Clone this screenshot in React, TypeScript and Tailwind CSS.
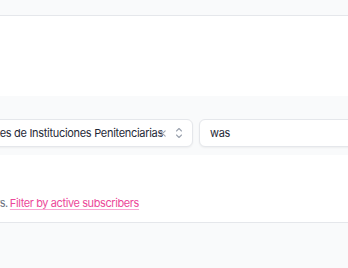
import React from "react";

export default function App() {
  return (
    <div
      className="w-[348px] h-[268px] overflow-hidden bg-[#f9fafb] flex flex-col"
      style={{ fontFamily: "Inter, 'Liberation Sans', sans-serif" }}
    >
      <div className="h-[16px] bg-[#f9fafb] border-b border-[#e5e7eb] shadow-[0_1px_2px_rgba(0,0,0,0.05)] shrink-0" />
      <div className="h-[80px] bg-white shrink-0" />
      <div className="h-[59px] bg-[#f9fafb] shrink-0 flex items-start gap-[6px] pt-[23px]">
        <div className="ml-[-120px] w-[313px] h-[28px] shrink-0 bg-white border border-[#e5e7eb] rounded-[6px] shadow-[0_1px_2px_rgba(0,0,0,0.05)] flex items-center overflow-hidden">
          <div className="flex-1 min-w-0 overflow-hidden flex justify-end">
            <span className="shrink-0 whitespace-nowrap text-[11px] tracking-[-0.3px] text-[#1f2937]">
              Funcionarios Agentes de Instituciones Penitenciarias
            </span>
          </div>
          <svg width="9" height="9" viewBox="0 0 10 10" className="relative z-10 shrink-0 ml-[-5px] text-[#9ca3af]">
            <path d="M2 2 L8 8 M8 2 L2 8" stroke="currentColor" strokeWidth="1.2" strokeLinecap="round" />
          </svg>
          <svg width="12" height="14" viewBox="0 0 12 14" className="shrink-0 ml-[6px] mr-[7px] text-[#9ca3af]">
            <path d="M3.5 5 L6 2.5 L8.5 5 M3.5 9 L6 11.5 L8.5 9" fill="none" stroke="currentColor" strokeWidth="1.1" strokeLinecap="round" strokeLinejoin="round" />
          </svg>
        </div>
        <div className="w-[200px] h-[28px] shrink-0 bg-white border border-[#e5e7eb] rounded-[6px] shadow-[0_1px_2px_rgba(0,0,0,0.05)] flex items-center pl-[10px]">
          <span className="text-[11px] tracking-[-0.3px] text-[#1f2937]">was</span>
        </div>
      </div>
      <div className="h-[68px] bg-white shrink-0 border-b border-[#e5e7eb] flex justify-end items-start pt-[41px] w-[348px]">
        <div className="flex-1 min-w-0 overflow-hidden flex justify-end">
          <div className="shrink-0 whitespace-nowrap text-[11px] tracking-[-0.4px] leading-[14px]">
            <span className="text-[#6b7280]">Showing matching subscribers.</span>
            <a className="ml-[2px] text-[#ec4899] underline decoration-[#f9a8d4] underline-offset-2">
              Filter by active subscribers
            </a>
          </div>
        </div>
        <div className="w-[209px] shrink-0" />
      </div>
      <div className="flex-1 bg-[#f9fafb]" />
    </div>
  );
}
